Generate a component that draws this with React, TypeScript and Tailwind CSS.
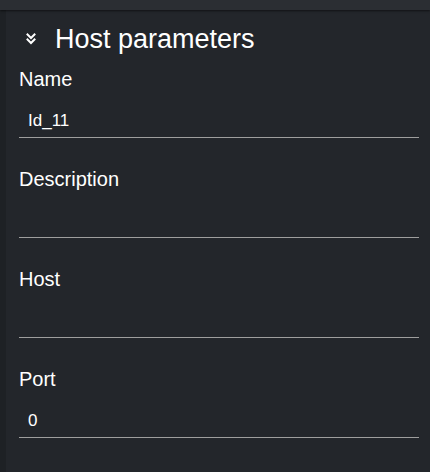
import React from 'react';

interface FieldProps {
  label: string;
  value?: string;
}

const Field: React.FC<FieldProps> = ({ label, value }) => (
  <div className="flex flex-col">
    <label className="h-[24px] text-[20px] leading-[24px] text-white">{label}</label>
    <div className="mt-[20px] h-[27px] border-b border-[#9e9e9e] pb-[6px] pl-[9px] text-[17px] leading-[20px] text-white">
      {value}
    </div>
  </div>
);

const DoubleChevron = () => (
  <svg width="10" height="12" viewBox="0 0 10 12" fill="none" stroke="#ffffff" strokeWidth="2" strokeLinecap="square">
    <path d="M1.5 1.5 L5 5 L8.5 1.5" />
    <path d="M1.5 6.5 L5 10 L8.5 6.5" />
  </svg>
);

export default function App() {
  return (
    <div className="flex h-[472px] w-[430px] flex-col overflow-hidden bg-[#23262b] font-['Liberation_Sans',Arial,sans-serif] text-white">
      <div className="relative z-10 h-[10px] shrink-0 bg-[#2b2e33] shadow-[0_1px_2px_rgba(0,0,0,0.55)]" />
      <div className="flex flex-1">
        <div className="w-[6px] shrink-0 bg-[#1e2125]" />
        <div className="flex-1 pl-[13px] pr-[11px]">
          <div className="mt-[13px] flex h-[32px] items-center">
            <span className="ml-[7px] mr-[19px] flex items-center">
              <DoubleChevron />
            </span>
            <h2 className="text-[27px] leading-[32px] font-normal">Host parameters</h2>
          </div>
          <div className="mt-[12px] flex flex-col gap-[29px]">
            <Field label="Name" value="Id_11" />
            <Field label="Description" />
            <Field label="Host" />
            <Field label="Port" value="0" />
          </div>
        </div>
      </div>
    </div>
  );
}
